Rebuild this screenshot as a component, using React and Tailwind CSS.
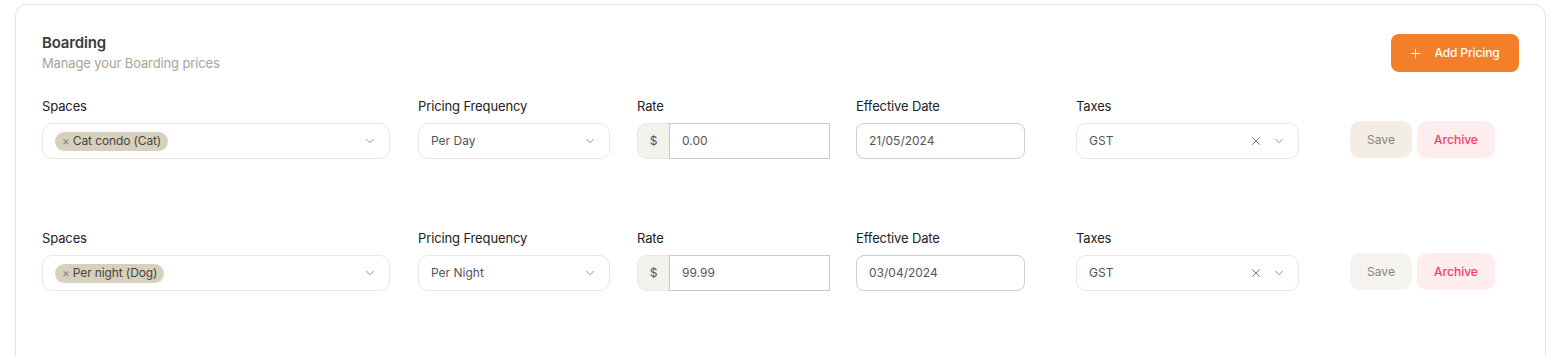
import { ChevronDown, Plus, X } from 'lucide-react';

const rows = [
  { space: 'Cat condo (Cat)', freq: 'Per Day', rate: '0.00', date: '21/05/2024', tax: 'GST', saveBg: 'bg-[#f3ede3]' },
  { space: 'Per night (Dog)', freq: 'Per Night', rate: '99.99', date: '03/04/2024', tax: 'GST', saveBg: 'bg-[#f4f3ef]' },
];

function Field({ label, width, children }) {
  return (
    <div className={`flex flex-col gap-[9px] ${width}`}>
      <label className="text-[13px] leading-[16px] tracking-[-0.01em] text-[#222]">{label}</label>
      {children}
    </div>
  );
}

function PricingRow({ row }) {
  return (
    <div className="flex items-start">
      <Field label="Spaces" width="w-[348px]">
        <div className="h-[36px] flex items-center justify-between rounded-[10px] border border-[#ede6da] bg-white pl-[12px] pr-[12px]">
          <span className="flex items-center gap-[3px] rounded-full bg-[#d7d0bf] pl-[7px] pr-[7px] h-[19px] text-[12px] tracking-[-0.01em] text-[#4a4538]">
            <span className="text-[12px] text-[#8d8777]">×</span>
            {row.space}
          </span>
          <ChevronDown size={14} strokeWidth={1.5} className="text-[#8a8778]" />
        </div>
      </Field>
      <div className="w-[28px]" />
      <Field label="Pricing Frequency" width="w-[192px]">
        <div className="h-[36px] flex items-center justify-between rounded-[10px] border border-[#ede6da] bg-white pl-[12px] pr-[12px]">
          <span className="text-[12px] text-[#555]">{row.freq}</span>
          <ChevronDown size={14} strokeWidth={1.5} className="text-[#8a8778]" />
        </div>
      </Field>
      <div className="w-[27px]" />
      <Field label="Rate" width="w-[193px]">
        <div className="h-[36px] flex">
          <div className="w-[32px] flex items-center justify-center rounded-l-[10px] border border-r-0 border-[#ece6db] bg-[#f4f2ec] text-[12px] text-[#555]">$</div>
          <div className="flex-1 flex items-center border border-[#c9c9c9] bg-white pl-[12px] text-[12px] text-[#555]">{row.rate}</div>
        </div>
      </Field>
      <div className="w-[26px]" />
      <Field label="Effective Date" width="w-[169px]">
        <div className="h-[36px] flex items-center rounded-[8px] border border-[#cdcdcd] bg-white pl-[12px] text-[12px] text-[#555]">
          {row.date}
        </div>
      </Field>
      <div className="w-[51px]" />
      <Field label="Taxes" width="w-[223px]">
        <div className="h-[36px] flex items-center justify-between rounded-[10px] border border-[#ede6da] bg-white pl-[12px] pr-[12px]">
          <span className="text-[12px] text-[#555]">{row.tax}</span>
          <div className="flex items-center gap-[9px]">
            <X size={14} strokeWidth={1.5} className="text-[#666]" />
            <ChevronDown size={14} strokeWidth={1.5} className="text-[#8a8778]" />
          </div>
        </div>
      </Field>
      <div className="w-[51px]" />
      <div className="flex gap-[5px] mt-[23px]">
        <button className={`w-[62px] h-[37px] rounded-[10px] ${row.saveBg} text-[12px] text-[#8a8478]`}>Save</button>
        <button className="w-[78px] h-[37px] rounded-[10px] bg-[#ffecec] text-[12px] font-medium text-[#f23d6b]">Archive</button>
      </div>
    </div>
  );
}

export default function App() {
  return (
    <div className="bg-white pl-[15px] pr-[17px] pt-[4px] font-['Inter',sans-serif]">
      <div className="min-h-[400px] rounded-[12px] border border-[#e6e2da] px-[26px] pt-[28px]">
        <div className="flex items-start justify-between">
          <div>
            <h2 className="text-[15px] leading-[20px] font-semibold tracking-[-0.01em] text-[#3a3a3a]">Boarding</h2>
            <p className="text-[13px] leading-[18px] mt-[1px] tracking-[-0.01em] text-[#a9a393]">Manage your Boarding prices</p>
          </div>
          <button className="mt-[1px] w-[128px] h-[38px] rounded-[8px] bg-[#f47f2a] flex items-center justify-center gap-[11px] pr-[2px] text-[12px] font-medium tracking-[-0.01em] text-white">
            <Plus size={15} strokeWidth={1.5} />
            Add Pricing
          </button>
        </div>
        <div className="mt-[26px] flex flex-col gap-[71px]">
          {rows.map((r, i) => (
            <PricingRow key={i} row={r} />
          ))}
        </div>
      </div>
    </div>
  );
}
